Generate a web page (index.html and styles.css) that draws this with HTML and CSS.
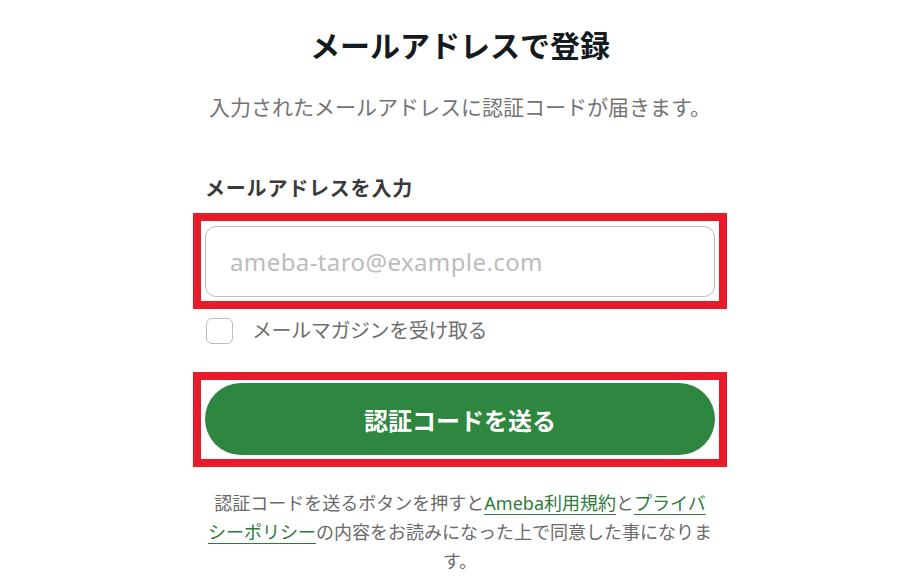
FILE: index.html
```html
<!DOCTYPE html>
<html lang="ja">
<head>
<meta charset="utf-8">
<title>メールアドレスで登録</title>
<link rel="stylesheet" href="styles.css">
</head>
<body>
<main class="page">
  <h1 class="title">メールアドレスで登録</h1>
  <p class="lead">入力されたメールアドレスに認証コードが届きます。</p>
  <label class="field-label" for="email">メールアドレスを入力</label>
  <div class="highlight highlight-input">
    <input class="email" id="email" type="email" placeholder="ameba-taro@example.com">
  </div>
  <label class="check-row">
    <input class="check" type="checkbox">
    <span class="check-text">メールマガジンを受け取る</span>
  </label>
  <div class="highlight highlight-button">
    <button class="submit" type="button">認証コードを送る</button>
  </div>
  <p class="note">認証コードを送るボタンを押すと<a class="link" href="#">Ameba利用規約</a>と<a class="link" href="#">プライバシーポリシー</a>の内容をお読みになった上で同意した事になります。</p>
</main>
</body>
</html>
```
FILE: styles.css
```css
* { box-sizing: border-box; }
html, body { margin: 0; padding: 0; background: #fff; }
body {
  font-family: "Noto Sans", "Noto Sans CJK JP", sans-serif;
  padding-left: 2px;
}
.page {
  width: 510px;
  margin: 0 auto;
  display: flex;
  flex-direction: column;
}
.title {
  margin: 26px 0 0;
  font-size: 30px;
  line-height: 40px;
  font-weight: 700;
  color: #151a1e;
  text-align: center;
}
.lead {
  margin: 26px -10px 0;
  font-size: 21px;
  line-height: 30px;
  color: #747474;
  text-align: center;
}
.field-label {
  margin-top: 52px;
  font-size: 20px;
  line-height: 30px;
  font-weight: 700;
  color: #3a3a3a;
  letter-spacing: 0.8px;
}
.highlight {
  border: 8px solid #e81b2a;
  margin: 0 -12px;
  display: flex;
}
.highlight-input {
  margin-top: 9px;
  padding: 5px 4px 4px;
}
.highlight-button {
  margin-top: 28px;
  padding: 3px 4px 4px;
}
.email {
  width: 100%;
  height: 71px;
  border: 1px solid #bdbdbd;
  border-radius: 11px;
  padding: 0 24px;
  font-family: "Noto Sans", "Noto Sans CJK JP", sans-serif;
  font-size: 24px;
  letter-spacing: 0.4px;
  color: #333;
  outline: none;
}
.email::placeholder { color: #bcbcbc; }
.check-row {
  margin-top: 9px;
  display: flex;
  align-items: center;
  gap: 19px;
  height: 26px;
  padding-left: 1px;
}
.check {
  appearance: none;
  -webkit-appearance: none;
  margin: 0;
  width: 27px;
  height: 26px;
  border: 1px solid #bdbdbd;
  border-radius: 6px;
  background: #fff;
}
.check-text {
  font-size: 20px;
  line-height: 26px;
  color: #6e6e6e;
  letter-spacing: -0.4px;
}
.submit {
  width: 100%;
  height: 72px;
  border: none;
  border-radius: 36px;
  background: #2f8640;
  color: #fff;
  font-family: "Noto Sans", "Noto Sans CJK JP", sans-serif;
  font-size: 24px;
  font-weight: 700;
  cursor: pointer;
}
.note {
  margin: 22px 3px 0;
  font-size: 18px;
  line-height: 29px;
  color: #6a6a6a;
  text-align: center;
}
.link {
  color: #2e7a39;
  text-decoration: underline;
  text-underline-offset: 4px;
}
```
